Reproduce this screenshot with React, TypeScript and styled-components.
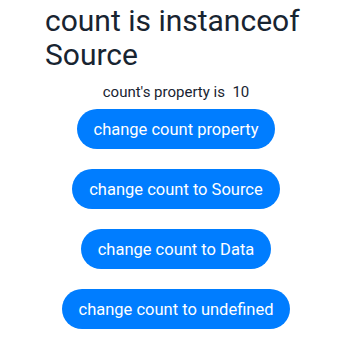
import styled, { createGlobalStyle } from "styled-components";

const GlobalStyle = createGlobalStyle`
  html, body {
    margin: 0;
    padding: 0;
    background: #ffffff;
  }
  body {
    font-family: Roboto, "Noto Sans", "Liberation Sans", sans-serif;
    -webkit-font-smoothing: antialiased;
  }
`;

const Page = styled.main`
  width: 352px;
  height: 346px;
  display: flex;
  flex-direction: column;
  align-items: center;
  box-sizing: border-box;
  padding-top: 4px;
`;

const Title = styled.h1`
  width: 262px;
  margin: 0;
  font-size: 30px;
  font-weight: 400;
  line-height: 34px;
  color: #182431;
  text-align: left;
`;

const Info = styled.p`
  margin: 10px 0 0;
  font-size: 15px;
  line-height: 20px;
  color: #182431;
  white-space: pre;
`;

const Actions = styled.div`
  display: flex;
  flex-direction: column;
  align-items: center;
  gap: 20px;
  margin-top: 7px;
`;

const ActionButton = styled.button`
  height: 40px;
  padding: 0 17px;
  border: none;
  border-radius: 20px;
  background: #007dff;
  color: #ffffff;
  font-family: inherit;
  font-size: 16.5px;
  cursor: pointer;
`;

const BUTTONS = [
  "change count property",
  "change count to Source",
  "change count to Data",
  "change count to undefined",
];

const App = () => {
  return (
    <>
      <GlobalStyle />
      <Page>
        <Title>count is instanceof Source</Title>
        <Info>count's property is  10</Info>
        <Actions>
          {BUTTONS.map((label) => (
            <ActionButton key={label}>{label}</ActionButton>
          ))}
        </Actions>
      </Page>
    </>
  );
};

export default App;
